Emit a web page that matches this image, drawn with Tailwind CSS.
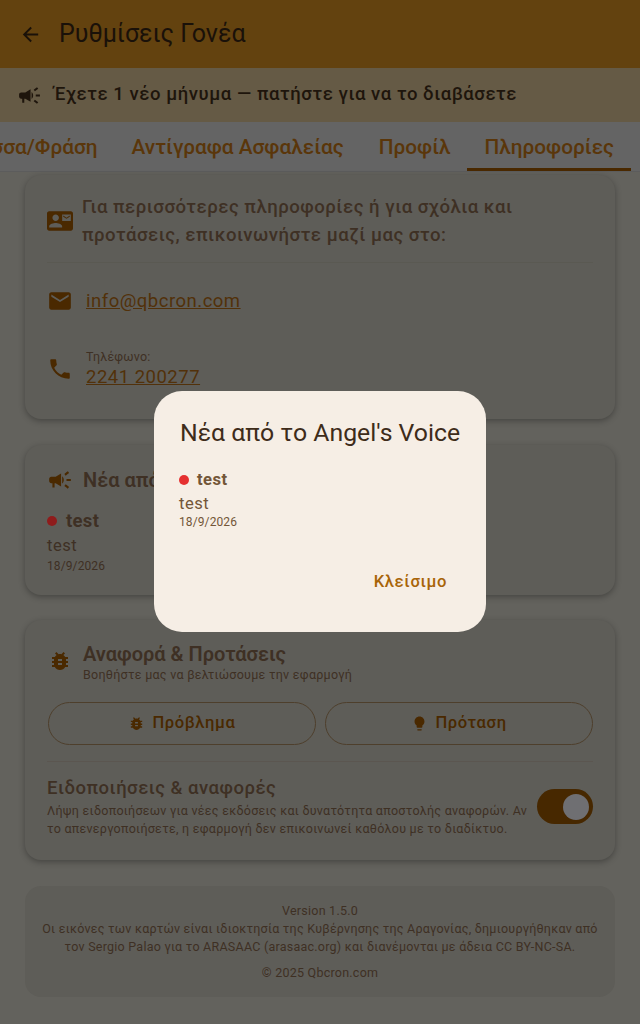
<!DOCTYPE html>
<html lang="el">
  <head>
    <meta charset="UTF-8" />
    <meta name="viewport" content="width=device-width, initial-scale=1.0" />
    <title>Ρυθμίσεις Γονέα</title>
    <script src="https://cdn.jsdelivr.net/npm/@tailwindcss/browser@4"></script>
  </head>
  <body class="font-['Roboto',sans-serif]">
    <div class="relative w-[640px] h-[1024px] overflow-hidden bg-[#63625d] text-[#3e3024]">
      <!-- app bar -->
      <header class="h-[68px] bg-[#63420f] flex items-center pl-[19px] gap-[17px] text-[#1a1109]">
        <svg class="w-[23px] h-[23px]" viewBox="0 0 24 24" fill="currentColor"><path d="M20 11H7.83l5.59-5.59L12 4l-8 8 8 8 1.41-1.41L7.83 13H20v-2z" /></svg>
        <h1 class="text-[25px]">Ρυθμίσεις Γονέα</h1>
      </header>

      <!-- message banner -->
      <div class="h-[54px] bg-[#655a45] flex items-center pl-[17px] gap-[12px] text-[#1e150c]">
        <svg class="w-[25px] h-[25px]" viewBox="0 0 24 24" fill="currentColor"><path d="M18 11v2h4v-2h-4zm-2 6.61c.96.71 2.21 1.65 3.2 2.39.4-.53.8-1.07 1.2-1.6-.99-.74-2.24-1.68-3.2-2.4-.4.54-.8 1.08-1.2 1.61zM20.4 5.6c-.4-.53-.8-1.07-1.2-1.6-.99.74-2.24 1.68-3.2 2.4.4.53.8 1.07 1.2 1.6.96-.72 2.21-1.65 3.2-2.4zM4 9c-1.1 0-2 .9-2 2v2c0 1.1.9 2 2 2h1v4h2v-4h1l5 3V6L8 9H4zm11.5 3c0-1.33-.58-2.53-1.5-3.35v6.69c.92-.81 1.5-2.01 1.5-3.34z" /></svg>
        <span class="text-[18.5px] font-medium tracking-[0.56px] whitespace-nowrap">Έχετε 1 νέο μήνυμα — πατήστε για να το διαβάσετε</span>
      </div>

      <!-- tabs, scrolled to the end -->
      <nav class="h-[50px] bg-[#646464] border-b border-[#5c5c5c] flex justify-end pr-[9px] overflow-hidden text-[20.8px] font-medium text-[#5a360a] whitespace-nowrap">
        <div class="px-[17px] pt-[2px] flex items-center shrink-0">Γλώσσα/Φράση</div>
        <div class="px-[17px] pt-[2px] flex items-center shrink-0">Αντίγραφα Ασφαλείας</div>
        <div class="pl-[18px] pr-[16px] pt-[2px] flex items-center shrink-0">Προφίλ</div>
        <div class="pl-[18px] pr-[17px] flex items-center shrink-0 border-b-[3px] border-[#4a2900] pt-[5px]">Πληροφορίες</div>
      </nav>

      <main class="px-[25px] pt-[3px] flex flex-col">
        <!-- contact -->
        <section class="h-[244px] rounded-[16px] bg-[#5e5d58] shadow-[0_2px_6px_rgba(0,0,0,0.3)] px-[22px] pt-[18px]">
          <div class="flex items-center gap-[9px] pb-[13px] border-b border-[#5a5952]">
            <svg class="w-[26px] h-[26px] text-[#4a2900] shrink-0" viewBox="0 0 24 24" fill="currentColor"><path d="M21 8V7l-3 2-3-2v1l3 2 3-2zm1-5H2C.9 3 0 3.9 0 5v14c0 1.1.9 2 2 2h20c1.1 0 1.99-.9 1.99-2L24 5c0-1.1-.9-2-2-2zM8 6c1.66 0 3 1.34 3 3s-1.34 3-3 3-3-1.34-3-3 1.34-3 3-3zm6 12H2v-1c0-2 4-3.1 6-3.1s6 1.1 6 3.1v1zm8-6h-8V6h8v6z" /></svg>
            <p class="text-[18.6px] leading-[28px] font-medium tracking-[0.5px]">Για περισσότερες πληροφορίες ή για σχόλια και προτάσεις, επικοινωνήστε μαζί μας στο:</p>
          </div>
          <div class="flex items-center gap-[13px] mt-[25px]">
            <svg class="w-[26px] h-[26px] text-[#4a2900] shrink-0" viewBox="0 0 24 24" fill="currentColor"><path d="M20 4H4c-1.1 0-1.99.9-1.99 2L2 18c0 1.1.9 2 2 2h16c1.1 0 2-.9 2-2V6c0-1.1-.9-2-2-2zm0 4l-8 5-8-5V6l8 5 8-5v2z" /></svg>
            <a class="text-[18.5px] leading-[26px] tracking-[0.5px] underline text-[#52310a]">info@qbcron.com</a>
          </div>
          <div class="flex items-center gap-[13px] mt-[35px]">
            <svg class="w-[26px] h-[26px] text-[#4a2900] shrink-0" viewBox="0 0 24 24" fill="currentColor"><path d="M6.62 10.79c1.44 2.83 3.76 5.14 6.59 6.59l2.2-2.2c.27-.27.67-.36 1.02-.24 1.12.37 2.33.57 3.57.57.55 0 1 .45 1 1V20c0 .55-.45 1-1 1-9.39 0-17-7.61-17-17 0-.55.45-1 1-1h3.5c.55 0 1 .45 1 1 0 1.25.2 2.45.57 3.57.11.35.03.74-.25 1.02l-2.2 2.2z" /></svg>
            <div class="flex flex-col">
              <span class="text-[12.5px] leading-[16px] tracking-[0.2px]">Τηλέφωνο:</span>
              <a class="text-[18.5px] leading-[24px] tracking-[0.5px] underline text-[#52310a]">2241 200277</a>
            </div>
          </div>
        </section>

        <!-- news -->
        <section class="h-[150px] mt-[26px] rounded-[16px] bg-[#5e5d58] shadow-[0_2px_6px_rgba(0,0,0,0.3)] px-[22px] pt-[20px]">
          <div class="flex items-center gap-[10px]">
            <svg class="w-[26px] h-[26px] text-[#4a2900]" viewBox="0 0 24 24" fill="currentColor"><path d="M18 11v2h4v-2h-4zm-2 6.61c.96.71 2.21 1.65 3.2 2.39.4-.53.8-1.07 1.2-1.6-.99-.74-2.24-1.68-3.2-2.4-.4.54-.8 1.08-1.2 1.61zM20.4 5.6c-.4-.53-.8-1.07-1.2-1.6-.99.74-2.24 1.68-3.2 2.4.4.53.8 1.07 1.2 1.6.96-.72 2.21-1.65 3.2-2.4zM4 9c-1.1 0-2 .9-2 2v2c0 1.1.9 2 2 2h1v4h2v-4h1l5 3V6L8 9H4zm11.5 3c0-1.33-.58-2.53-1.5-3.35v6.69c.92-.81 1.5-2.01 1.5-3.34z" /></svg>
            <h2 class="text-[20px] font-semibold">Νέα από το Angel's Voice</h2>
          </div>
          <div class="flex items-center gap-[9px] mt-[14px]">
            <span class="w-[10px] h-[10px] rounded-full bg-[#8f1c1c]"></span>
            <span class="text-[18.5px] leading-[24px] font-bold tracking-[0.3px]">test</span>
          </div>
          <p class="text-[16.6px] leading-[20px] mt-[3px] tracking-[0.5px]">test</p>
          <p class="text-[12px] leading-[16px] mt-[2px] tracking-[0.1px]">18/9/2026</p>
        </section>

        <!-- feedback -->
        <section class="h-[240px] mt-[25px] rounded-[16px] bg-[#5e5d58] shadow-[0_2px_6px_rgba(0,0,0,0.3)] px-[22px] pt-[20px]">
          <div class="flex items-center gap-[11px] pl-[1px]">
            <svg class="w-[24px] h-[24px] text-[#4a2900]" viewBox="0 0 24 24" fill="currentColor"><path d="M20 8h-2.81c-.45-.78-1.07-1.45-1.82-1.96L17 4.41 15.59 3l-2.17 2.17C12.96 5.06 12.49 5 12 5c-.49 0-.96.06-1.41.17L8.41 3 7 4.41l1.62 1.63C7.88 6.55 7.26 7.22 6.81 8H4v2h2.09c-.05.33-.09.66-.09 1v1H4v2h2v1c0 .34.04.67.09 1H4v2h2.81c1.04 1.79 2.97 3 5.19 3s4.15-1.21 5.19-3H20v-2h-2.09c.05-.33.09-.66.09-1v-1h2v-2h-2v-1c0-.34-.04-.67-.09-1H20V8zm-6 8h-4v-2h4v2zm0-4h-4v-2h4v2z" /></svg>
            <div>
              <h2 class="text-[20px] leading-[28px] font-semibold">Αναφορά &amp; Προτάσεις</h2>
              <p class="text-[12.5px] leading-[14px] tracking-[0.27px]">Βοηθήστε μας να βελτιώσουμε την εφαρμογή</p>
            </div>
          </div>
          <div class="grid grid-cols-2 gap-[9px] mt-[20px] pl-[1px]">
            <button class="h-[43px] rounded-full border border-[#4e3f2c] flex items-center justify-center gap-[7px] text-[16.6px] font-medium tracking-[0.6px] text-[#4a2900]">
              <svg class="w-[17px] h-[17px]" viewBox="0 0 24 24" fill="currentColor"><path d="M20 8h-2.81c-.45-.78-1.07-1.45-1.82-1.96L17 4.41 15.59 3l-2.17 2.17C12.96 5.06 12.49 5 12 5c-.49 0-.96.06-1.41.17L8.41 3 7 4.41l1.62 1.63C7.88 6.55 7.26 7.22 6.81 8H4v2h2.09c-.05.33-.09.66-.09 1v1H4v2h2v1c0 .34.04.67.09 1H4v2h2.81c1.04 1.79 2.97 3 5.19 3s4.15-1.21 5.19-3H20v-2h-2.09c.05-.33.09-.66.09-1v-1h2v-2h-2v-1c0-.34-.04-.67-.09-1H20V8zm-6 8h-4v-2h4v2zm0-4h-4v-2h4v2z" /></svg>
              Πρόβλημα
            </button>
            <button class="h-[43px] rounded-full border border-[#4e3f2c] flex items-center justify-center gap-[7px] text-[16.6px] font-medium tracking-[0.6px] text-[#4a2900]">
              <svg class="w-[17px] h-[17px]" viewBox="0 0 24 24" fill="currentColor"><path d="M9 21c0 .55.45 1 1 1h4c.55 0 1-.45 1-1v-1H9v1zm3-19C8.14 2 5 5.14 5 9c0 2.38 1.19 4.47 3 5.74V17c0 .55.45 1 1 1h6c.55 0 1-.45 1-1v-2.26c1.81-1.27 3-3.36 3-5.74 0-3.86-3.14-7-7-7z" /></svg>
              Πρόταση
            </button>
          </div>
          <div class="mt-[16px] pt-[13px] border-t border-[#5b5650] flex items-start justify-between">
            <div class="w-[484px]">
              <h3 class="text-[18.5px] leading-[26px] font-medium tracking-[0.5px]">Ειδοποιήσεις &amp; αναφορές</h3>
              <p class="text-[12.5px] leading-[18px] tracking-[0.27px] mt-[1px]">Λήψη ειδοποιήσεων για νέες εκδόσεις και δυνατότητα αποστολής αναφορών. Αν το απενεργοποιήσετε, η εφαρμογή δεν επικοινωνεί καθόλου με το διαδίκτυο.</p>
            </div>
            <div class="w-[56px] h-[35px] mt-[14px] rounded-full bg-[#472800] flex items-center justify-end pr-[4px]">
              <span class="w-[26px] h-[26px] rounded-full bg-[#6f6f72]"></span>
            </div>
          </div>
        </section>

        <!-- footer -->
        <footer class="h-[111px] mt-[26px] rounded-[16px] bg-[#5e5d58] pt-[16px] px-[12px] text-center text-[12.5px] leading-[18px] tracking-[0.24px]">
          <p>Version 1.5.0</p>
          <p>Οι εικόνες των καρτών είναι ιδιοκτησία της Κυβέρνησης της Αραγονίας, δημιουργήθηκαν από τον Sergio Palao για το ARASAAC (arasaac.org) και διανέμονται με άδεια CC BY-NC-SA.</p>
          <p class="mt-[8px]">© 2025 Qbcron.com</p>
        </footer>
      </main>

      <!-- dialog -->
      <div class="absolute left-[154px] top-[391px] w-[332px] h-[241px] rounded-[28px] bg-[#f6eee5] px-[26px] pt-[24px] flex flex-col">
        <h2 class="text-[24.8px] leading-[36px] text-[#3e2c1a] whitespace-nowrap">Νέα από το Angel's Voice</h2>
        <div class="flex items-center gap-[8px] mt-[17px] -ml-[1px]">
          <span class="w-[10px] h-[10px] rounded-full bg-[#e53030]"></span>
          <span class="text-[16.6px] leading-[24px] font-bold tracking-[0.5px] text-[#735638]">test</span>
        </div>
        <p class="text-[16.6px] leading-[20px] mt-[2px] -ml-[1px] tracking-[0.5px] text-[#735638]">test</p>
        <p class="text-[12px] leading-[16px] -ml-[1px] tracking-[0.1px] text-[#735638]">18/9/2026</p>
        <button class="self-end mt-[40px] mr-[13px] text-[16.6px] leading-[24px] font-medium tracking-[0.6px] text-[#a86408]">Κλείσιμο</button>
      </div>
    </div>
  </body>
</html>
